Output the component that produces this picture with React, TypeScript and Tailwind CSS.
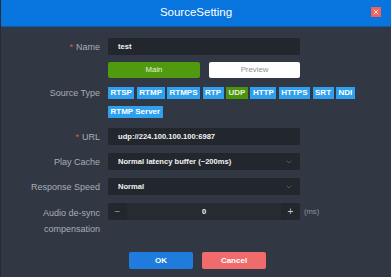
import { ChevronDown, X } from "lucide-react";

const types = ["RTSP", "RTMP", "RTMPS", "RTP", "UDP", "HTTP", "HTTPS", "SRT", "NDI", "RTMP Server"];

function Label({ children, required }: { children: React.ReactNode; required?: boolean }) {
  return (
    <div className="w-[99px] shrink-0 text-right text-[9px] leading-[12px] text-[#a9aeb6]">
      {required ? <span className="mr-[3px] text-[#e5534b]">*</span> : null}
      {children}
    </div>
  );
}

function Select({ value }: { value: string }) {
  return (
    <div className="flex h-[17px] w-[192px] items-center justify-between rounded-[2px] bg-[#22262d] pl-[10px] pr-[7px]">
      <span className="text-[7.6px] font-bold text-[#f2f3f5]">{value}</span>
      <ChevronDown className="h-[8px] w-[8px] text-[#6b7079]" strokeWidth={2} />
    </div>
  );
}

export default function App() {
  return (
    <div
      className="flex h-[277px] w-[391px] flex-col overflow-hidden border-l border-[#262b33] bg-[#313843]"
      style={{ fontFamily: '"Liberation Sans", Arial, sans-serif' }}
    >
      <div className="relative flex h-[27px] shrink-0 items-center justify-center border-b border-[#0a5cb0] bg-[#0875df]">
        <span className="text-[11.5px] text-white">SourceSetting</span>
        <button className="absolute left-[370px] top-[7px] flex h-[10px] w-[10px] items-center justify-center bg-[#f0625d]">
          <X className="h-[8px] w-[8px] text-white" strokeWidth={2.5} />
        </button>
      </div>

      <div className="flex flex-col pt-[11px]">
        <div className="flex items-center gap-[8px]">
          <Label required>Name</Label>
          <div className="flex h-[17px] w-[192px] items-center rounded-[2px] bg-[#22262d] pl-[10px]">
            <span className="text-[7.6px] font-bold text-[#f2f3f5]">test</span>
          </div>
        </div>

        <div className="mt-[7px] flex gap-[9px] pl-[107px]">
          <button className="h-[16px] w-[92px] rounded-[2px] bg-[#4f9a0e] text-[7.8px] text-[#e8f3df]">Main</button>
          <button className="h-[16px] w-[91px] rounded-[2px] bg-white text-[7.8px] text-[#8c9096]">Preview</button>
        </div>

        <div className="mt-[9px] flex items-start gap-[8px]">
          <Label>Source Type</Label>
          <div className="flex w-[262px] flex-wrap gap-x-[2.5px] gap-y-[7px]">
            {types.map((t) => (
              <span
                key={t}
                className={
                  t === "UDP"
                    ? "h-[12px] bg-[#4a940c] px-[2.5px] text-[8px] font-bold leading-[12px] text-[#e6f0dc]"
                    : "h-[12px] bg-[#2f9ff0] px-[2.5px] text-[8px] font-bold leading-[12px] text-white"
                }
              >
                {t}
              </span>
            ))}
          </div>
        </div>

        <div className="mt-[10px] flex items-center gap-[8px]">
          <Label required>URL</Label>
          <div className="flex h-[17px] w-[192px] items-center rounded-[2px] bg-[#22262d] pl-[10px]">
            <span className="text-[7.6px] font-bold text-[#f2f3f5]">udp://224.100.100.100:6987</span>
          </div>
        </div>

        <div className="mt-[8px] flex items-center gap-[8px]">
          <Label>Play Cache</Label>
          <Select value="Normal latency buffer (~200ms)" />
        </div>

        <div className="mt-[8px] flex items-center gap-[8px]">
          <Label>Response Speed</Label>
          <Select value="Normal" />
        </div>

        <div className="mt-[8px] flex items-start gap-[8px]">
          <div className="w-[99px] shrink-0 pt-[2px] text-right text-[9px] leading-[16px] text-[#a9aeb6]">
            Audio de-sync
            <br />
            compensation
          </div>
          <div className="flex items-center gap-[4px]">
            <div className="flex h-[17px] w-[192px] items-stretch overflow-hidden rounded-[2px] bg-[#22262d]">
              <span className="flex w-[19px] items-center justify-center text-[10px] text-[#9a9ea6]">−</span>
              <span className="flex flex-1 items-center justify-center bg-[#262a31] text-[7.6px] font-bold text-[#f2f3f5]">0</span>
              <span className="flex w-[19px] items-center justify-center text-[10px] text-[#c9ccd1]">+</span>
            </div>
            <span className="text-[7.6px] text-[#8f949c]">(ms)</span>
          </div>
        </div>

        <div className="mt-[15px] flex justify-center gap-[9px] pl-[3px]">
          <button className="h-[17px] w-[64px] rounded-[2px] bg-[#1f7bdc] text-[8px] font-bold text-white">OK</button>
          <button className="h-[17px] w-[64px] rounded-[2px] bg-[#f06b6b] text-[8px] font-bold text-white">Cancel</button>
        </div>
      </div>
    </div>
  );
}
